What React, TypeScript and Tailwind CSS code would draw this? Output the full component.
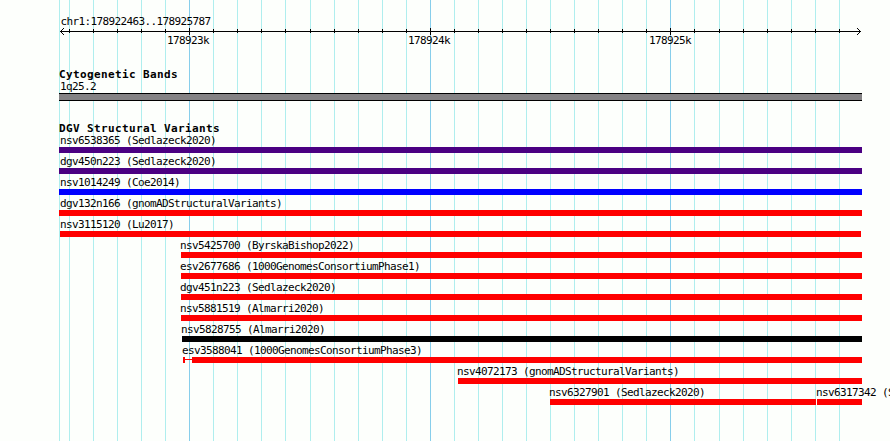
type Feature = { label: string; start: number; end: number; labelX: number; color: string };

const minorLines = [
  59, 69, 93, 117, 141, 165, 213, 237, 261, 285, 310, 334, 358, 382, 406, 454, 478, 502, 526, 550,
  574, 598, 622, 646, 694, 719, 743, 767, 791, 815, 839,
];
const majorLines = [189, 430, 670];

const rulerLabels = [
  { text: "178923k", x: 167 },
  { text: "178924k", x: 408 },
  { text: "178925k", x: 649 },
];

const rows: Feature[][] = [
  [{ label: "nsv6538365 (Sedlazeck2020)", start: 59, end: 862, labelX: 60, color: "bg-[#4b0082]" }],
  [{ label: "dgv450n223 (Sedlazeck2020)", start: 59, end: 862, labelX: 60, color: "bg-[#4b0082]" }],
  [{ label: "nsv1014249 (Coe2014)", start: 59, end: 862, labelX: 60, color: "bg-[#0000ff]" }],
  [{ label: "dgv132n166 (gnomADStructuralVariants)", start: 59, end: 862, labelX: 60, color: "bg-[#ff0000]" }],
  [{ label: "nsv3115120 (Lu2017)", start: 60, end: 861, labelX: 60, color: "bg-[#ff0000]" }],
  [{ label: "nsv5425700 (ByrskaBishop2022)", start: 181, end: 862, labelX: 180, color: "bg-[#ff0000]" }],
  [{ label: "esv2677686 (1000GenomesConsortiumPhase1)", start: 181, end: 862, labelX: 180, color: "bg-[#ff0000]" }],
  [{ label: "dgv451n223 (Sedlazeck2020)", start: 181, end: 862, labelX: 180, color: "bg-[#ff0000]" }],
  [{ label: "nsv5881519 (Almarri2020)", start: 181, end: 862, labelX: 180, color: "bg-[#ff0000]" }],
  [{ label: "nsv5828755 (Almarri2020)", start: 182, end: 862, labelX: 181, color: "bg-black" }],
  [{ label: "esv3588041 (1000GenomesConsortiumPhase3)", start: 192, end: 862, labelX: 182, color: "bg-[#ff0000]" }],
  [{ label: "nsv4072173 (gnomADStructuralVariants)", start: 458, end: 862, labelX: 457, color: "bg-[#ff0000]" }],
  [
    { label: "nsv6327901 (Sedlazeck2020)", start: 550, end: 816, labelX: 549, color: "bg-[#ff0000]" },
    { label: "nsv6317342 (Sedlazeck2020)", start: 817, end: 862, labelX: 816, color: "bg-[#ff0000]" },
  ],
];

function Grid() {
  return (
    <svg className="absolute inset-0" width={890} height={441} shapeRendering="crispEdges">
      {minorLines.map((x) => (
        <rect key={x} x={x} y={0} width={1} height={441} fill="#afeeee" />
      ))}
      {majorLines.map((x) => (
        <rect key={x} x={x} y={0} width={1} height={441} fill="#87ceeb" />
      ))}
    </svg>
  );
}

function Ruler() {
  return (
    <svg className="block" width={890} height={7} shapeRendering="crispEdges">
      <rect x={60} y={3} width={801} height={1} />
      {minorLines.slice(1).map((x) => (
        <rect key={x} x={x} y={1} width={1} height={4} />
      ))}
      {majorLines.map((x) => (
        <rect key={x} x={x} y={0} width={1} height={7} />
      ))}
      {/* arrow heads */}
      {[1, 2, 3].map((d) => (
        <g key={d}>
          <rect x={60 + d} y={3 - d} width={1} height={1} />
          <rect x={60 + d} y={3 + d} width={1} height={1} />
          <rect x={860 - d} y={3 - d} width={1} height={1} />
          <rect x={860 - d} y={3 + d} width={1} height={1} />
        </g>
      ))}
    </svg>
  );
}

function FeatureRow({ features }: { features: Feature[] }) {
  return (
    <div className="h-[21px]">
      <div className="grid h-[15px]">
        {features.map((f) => (
          <span key={f.label} className="col-start-1 row-start-1 leading-[17px]" style={{ paddingLeft: f.labelX }}>
            {f.label}
          </span>
        ))}
      </div>
      <div className="grid h-[6px]">
        {features.map((f) => (
          <div
            key={f.label}
            className={"col-start-1 row-start-1 h-[6px] " + f.color}
            style={{ marginLeft: f.start, width: f.end - f.start }}
          />
        ))}
        {/* left edge of the confidence interval */}
        {features[0].label.startsWith("esv3588041") && (
          <div className="col-start-1 row-start-1 ml-[183px] flex h-[6px] w-[9px] items-start">
            <div className="h-[6px] w-[2px] bg-[#ff0000]" />
            <div className="mt-[2px] h-px flex-1 bg-[#ff0000]" />
          </div>
        )}
      </div>
    </div>
  );
}

export default function App() {
  return (
    <div className="relative h-[441px] w-[890px] overflow-hidden bg-[#fdfffc] font-['DejaVu_Sans_Mono',monospace] text-[11px] tracking-[-0.62px] whitespace-pre text-black">
      <Grid />
      <div className="relative">
        <div className="h-[28px] pt-[15px] pl-[60.5px] leading-[13px]">chr1:178922463..178925787</div>
        <Ruler />
        <div className="grid h-[12px]">
          {rulerLabels.map((l) => (
            <span key={l.text} className="col-start-1 row-start-1 leading-[12px]" style={{ paddingLeft: l.x }}>
              {l.text}
            </span>
          ))}
        </div>

        <h2 className="mt-[20px] h-[13px] pl-[59px] leading-[15px] font-bold tracking-[0.38px]">Cytogenetic Bands</h2>
        <div className="h-[13px] pl-[60px] leading-[13px]">1q25.2</div>
        <div className="ml-[59px] h-[8px] w-[803px] border-y border-black bg-[#848284]" />

        <h2 className="mt-[20px] h-[11px] pl-[59px] leading-[15px] font-bold tracking-[0.38px]">
          DGV Structural Variants
        </h2>
        {rows.map((features) => (
          <FeatureRow key={features[0].label} features={features} />
        ))}
      </div>
    </div>
  );
}
